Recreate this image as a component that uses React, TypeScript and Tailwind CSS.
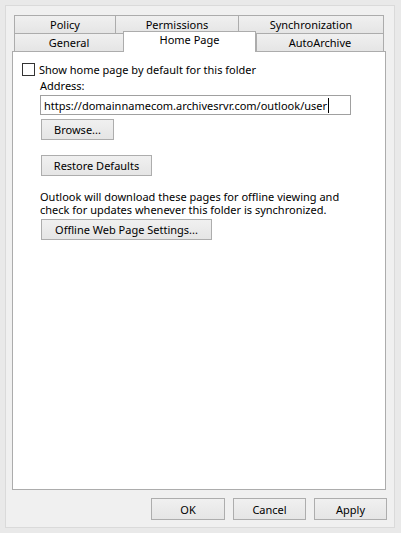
export default function App() {
  const font = { fontFamily: '"Noto Sans", "Open Sans", sans-serif' };
  const tab =
    "flex items-center justify-center border-t border-l border-[#acacac] bg-gradient-to-b from-[#f0f0f0] to-[#e5e5e5] text-[11px] leading-none text-black";
  const btn =
    "flex h-[21px] items-center justify-center border border-[#adadad] bg-gradient-to-b from-[#f0f0f0] to-[#e5e5e5] text-[11px] leading-none text-black";

  return (
    <div
      className="h-[533px] w-[401px] bg-[#e9e9e9] p-[5px] text-black"
      style={font}
    >
      <div className="flex h-[523px] w-[390px] flex-col border border-[#dadada] bg-[#f0f0f0] pl-[6px] pt-[9px] pr-[7px]">
        {/* tabs */}
        <div className="ml-[2px] flex flex-col">
          <div className="flex h-[18px]">
            <div className={`${tab} w-[101px]`}>Policy</div>
            <div className={`${tab} w-[123px]`}>Permissions</div>
            <div className={`${tab} w-[146px] border-r`}>Synchronization</div>
          </div>
          <div className="flex h-[18px]">
            <div className={`${tab} w-[109px]`}>General</div>
            <div className="relative z-10 -mt-[2px] flex h-[21px] w-[133px] items-start justify-center border-x border-t border-[#acacac] bg-white pt-[2px] text-[11px] leading-none">
              Home Page
            </div>
            <div className={`${tab} w-[128px] border-r`}>AutoArchive</div>
          </div>
        </div>

        {/* panel */}
        <div className="flex h-[439px] w-[374px] flex-col border border-[#acacac] bg-white pl-[9px] pt-[11px] text-[11px]">
          <label className="flex h-[13px] items-center gap-[4px] leading-[13px]">
            <span className="h-[13px] w-[13px] border border-[#333333] bg-white" />
            <span className="-mt-px">Show home page by default for this folder</span>
          </label>

          <div className="ml-[18px] mt-[3px] flex flex-col">
            <div className="leading-[13px]">Address:</div>
            <div className="mt-[3px] flex h-[20px] w-[311px] items-center border border-[#a0a0a0] bg-white pl-[3px] leading-none">
              <span>https://domainnamecom.archivesrvr.com/outlook/user</span>
              <span className="ml-px h-[15px] w-px bg-black" />
            </div>
            <div className={`${btn} ml-px mt-[4px] w-[73px]`}>Browse...</div>
            <div className={`${btn} ml-px mt-[15px] w-[111px]`}>Restore Defaults</div>
            <div className="mt-[14px] flex flex-col">
              <div className="h-[13px] leading-[13px]">
                Outlook will download these pages for offline viewing and
              </div>
              <div className="h-[13px] leading-[13px]">
                check for updates whenever this folder is synchronized.
              </div>
            </div>
            <div className={`${btn} ml-px mt-[3px] w-[171px]`}>
              Offline Web Page Settings...
            </div>
          </div>
        </div>

        {/* dialog buttons */}
        <div className="mt-[8px] flex justify-end gap-[8px]">
          <div className={`${btn} h-[22px] w-[74px] border-[#3c9cf5]`}>OK</div>
          <div className={`${btn} h-[22px] w-[73px]`}>Cancel</div>
          <div className={`${btn} h-[22px] w-[73px]`}>Apply</div>
        </div>
      </div>
    </div>
  );
}
